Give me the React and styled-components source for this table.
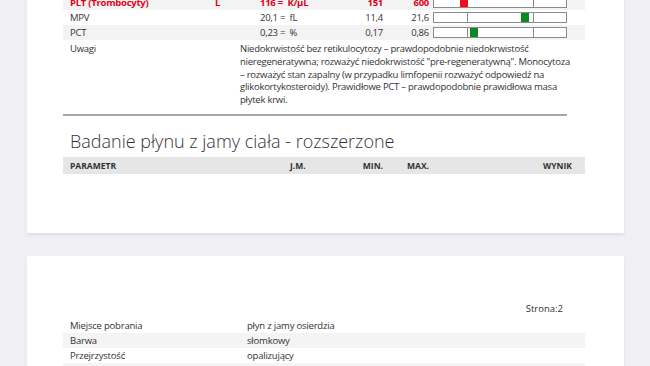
import React from 'react';
import styled, { createGlobalStyle } from 'styled-components';

const GlobalStyle = createGlobalStyle`
  html, body {
    margin: 0;
    padding: 0;
    background: #efeff4;
    font-family: 'Open Sans', 'Noto Sans', sans-serif;
    color: #333;
    overflow: hidden;
  }
`;

const Page = styled.div`
  display: flex;
  flex-direction: column;
  gap: 23px;
  padding: 0 26px 0 27px;
  margin-top: -5px;
`;

const Card = styled.div`
  background: #fff;
  box-shadow: 0 2px 3px rgba(0, 0, 0, 0.08);
  padding: ${(p) => p.$pad || '0 39px 59px 36px'};
`;

const ResultRow = styled.div`
  display: grid;
  grid-template-columns: 147px 40px 90px 43px 46px 4px 134px 18px;
  align-items: center;
  height: 15px;
  font-size: 9.5px;
  letter-spacing: -0.25px;
  background: ${(p) => (p.$shade ? '#f3f3f3' : '#fff')};
  color: ${(p) => (p.$alert ? '#e3001b' : '#333')};
  font-weight: ${(p) => (p.$alert ? 700 : 400)};
`;

const Cell = styled.div`
  white-space: pre;
  text-align: ${(p) => p.$align || 'left'};
  padding-left: ${(p) => p.$pl || '0'};
`;

const Bar = styled.div`
  position: relative;
  height: 11px;
  border: 1px solid #8a8a8a;
  background: #fff;
  box-sizing: border-box;
  display: grid;
  grid-template-columns: 33px 1fr 33px;
`;

const BarSegment = styled.div`
  border-left: ${(p) => (p.$first ? 'none' : '1px solid #8a8a8a')};
`;

const Marker = styled.div`
  position: absolute;
  top: 0;
  bottom: 0;
  width: 8px;
  background: ${(p) => (p.$alert ? '#ee0f1a' : '#0b8a22')};
`;

const NoteRow = styled.div`
  display: grid;
  grid-template-columns: 177px 1fr;
  font-size: 9.5px;
  letter-spacing: -0.25px;
  line-height: 12.8px;
  padding-top: 3px;
`;

const NoteLabel = styled.div`
  padding-left: 7px;
`;

const NoteText = styled.div`
  padding-right: 10px;
`;

const Rule = styled.div`
  height: 2px;
  background: #a8a8a8;
  margin: 7px 18px 0 0;
`;

const Heading = styled.h2`
  margin: 13px 0 4px 7px;
  font-size: 18px;
  font-weight: 300;
  color: #333;
`;

const HeaderBar = styled.div`
  display: grid;
  grid-template-columns: 220px 53px 40px 46px 1fr;
  align-items: center;
  height: 17px;
  background: #e6e6e6;
  font-size: 8.5px;
  font-weight: 700;
  color: #333;
  padding: 0 13px 0 7px;
`;

const HeaderCell = styled.span`
  text-align: ${(p) => (p.$right ? 'right' : 'left')};
`;

const PageNumber = styled.div`
  text-align: right;
  font-size: 9.5px;
  padding: 45px 22px 0 0;
  margin-bottom: 2px;
  height: 15px;
  line-height: 15px;
`;

const InfoRow = styled.div`
  display: grid;
  grid-template-columns: 177px 1fr;
  align-items: center;
  height: 15px;
  font-size: 9.5px;
  letter-spacing: -0.2px;
  padding-left: 7px;
  background: ${(p) => (p.$shade ? '#f4f4f4' : '#fff')};
`;

const results = [
  { name: 'PLT (Trombocyty)', flag: 'L', value: '116 =  K/µL', min: '151', max: '600', pos: 26, alert: true, shade: true },
  { name: 'MPV', value: '20,1 =  fL', min: '11,4', max: '21,6', pos: 87 },
  { name: 'PCT', value: '0,23 =  %', min: '0,17', max: '0,86', pos: 36, shade: true },
];

const info = [
  ['Miejsce pobrania', 'płyn z jamy osierdzia'],
  ['Barwa', 'słomkowy'],
  ['Przejrzystość', 'opalizujący'],
  ['Skrzep', 'nieobecny'],
];

function ResultLine({ r }) {
  return (
    <ResultRow $shade={r.shade} $alert={r.alert}>
      <Cell $pl="7px">{r.name}</Cell>
      <Cell $pl="5px">{r.flag}</Cell>
      <Cell $pl="10px">{r.value}</Cell>
      <Cell $align="right">{r.min}</Cell>
      <Cell $align="right">{r.max}</Cell>
      <Cell />
      <Bar>
        <BarSegment $first />
        <BarSegment />
        <BarSegment />
        <Marker $alert={r.alert} style={{ left: r.pos }} />
      </Bar>
    </ResultRow>
  );
}

export default function App() {
  return (
    <>
      <GlobalStyle />
      <Page>
        <Card>
          {results.map((r) => (
            <ResultLine key={r.name} r={r} />
          ))}
          <NoteRow>
            <NoteLabel>Uwagi</NoteLabel>
            <NoteText>
              Niedokrwistość bez retikulocytozy – prawdopodobnie niedokrwistość
              nieregeneratywna; rozważyć niedokrwistość "pre-regeneratywną". Monocytoza
              – rozważyć stan zapalny (w przypadku limfopenii rozważyć odpowiedź na
              glikokortykosteroidy). Prawidłowe PCT – prawdopodobnie prawidłowa masa
              płytek krwi.
            </NoteText>
          </NoteRow>
          <Rule />
          <Heading>Badanie płynu z jamy ciała - rozszerzone</Heading>
          <HeaderBar>
            <HeaderCell>PARAMETR</HeaderCell>
            <HeaderCell>J.M.</HeaderCell>
            <HeaderCell $right>MIN.</HeaderCell>
            <HeaderCell $right>MAX.</HeaderCell>
            <HeaderCell $right>WYNIK</HeaderCell>
          </HeaderBar>
        </Card>
        <Card $pad="0 39px 20px 36px">
          <PageNumber>Strona:2</PageNumber>
          {info.map(([k, v], i) => (
            <InfoRow key={k} $shade={i % 2 === 1}>
              <span>{k}</span>
              <span>{v}</span>
            </InfoRow>
          ))}
        </Card>
      </Page>
    </>
  );
}
